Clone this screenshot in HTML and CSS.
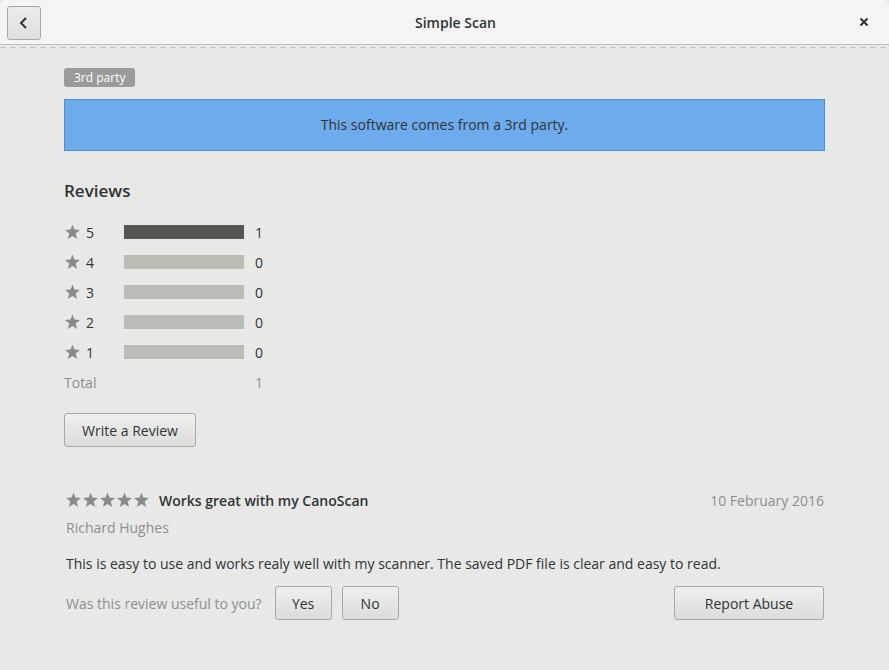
FILE: index.html
```html
<!DOCTYPE html>
<html lang="en">
<head>
    <meta charset="UTF-8">
    <meta name="viewport" content="width=device-width, initial-scale=1.0">
    <title>Simple Scan</title>
    <link rel="stylesheet" href="styles.css">
</head>
<body>
    <div class="window">
        <header class="titlebar">
            <button class="back-button" aria-label="Back">
                <svg width="16" height="16" viewBox="0 0 16 16"><path d="M10 3 L5 8 L10 13" fill="none" stroke="#2e3436" stroke-width="2"/></svg>
            </button>
            <div class="title">Simple Scan</div>
            <button class="close-button" aria-label="Close">
                <svg width="10" height="10" viewBox="0 0 10 10"><path d="M1.5 1.5 L8.5 8.5 M8.5 1.5 L1.5 8.5" stroke="#2e3436" stroke-width="2"/></svg>
            </button>
        </header>
        <div class="dashes"></div>

        <main class="content">
            <div class="badge">3rd party</div>
            <div class="banner">This software comes from a 3rd party.</div>

            <h2 class="section-title">Reviews</h2>
            <div class="histogram">
                <div class="hist-row">
                    <span class="star"></span><span class="hist-label">5</span>
                    <span class="bar"><span class="bar-fill" style="width: 100%;"></span></span>
                    <span class="hist-count">1</span>
                </div>
                <div class="hist-row">
                    <span class="star"></span><span class="hist-label">4</span>
                    <span class="bar"><span class="bar-fill" style="width: 0%;"></span></span>
                    <span class="hist-count">0</span>
                </div>
                <div class="hist-row">
                    <span class="star"></span><span class="hist-label">3</span>
                    <span class="bar"><span class="bar-fill" style="width: 0%;"></span></span>
                    <span class="hist-count">0</span>
                </div>
                <div class="hist-row">
                    <span class="star"></span><span class="hist-label">2</span>
                    <span class="bar"><span class="bar-fill" style="width: 0%;"></span></span>
                    <span class="hist-count">0</span>
                </div>
                <div class="hist-row">
                    <span class="star"></span><span class="hist-label">1</span>
                    <span class="bar"><span class="bar-fill" style="width: 0%;"></span></span>
                    <span class="hist-count">0</span>
                </div>
                <div class="hist-row total">
                    <span class="total-label">Total</span>
                    <span class="hist-count">1</span>
                </div>
            </div>

            <button class="button write-button">Write a Review</button>

            <div class="review">
                <div class="review-head">
                    <span class="stars">
                        <span class="star"></span><span class="star"></span><span class="star"></span><span class="star"></span><span class="star"></span>
                    </span>
                    <span class="review-title">Works great with my CanoScan</span>
                    <span class="review-date">10 February 2016</span>
                </div>
                <div class="review-author">Richard Hughes</div>
                <p class="review-text">This is easy to use and works realy well with my scanner. The saved PDF file is clear and easy to read.</p>
                <div class="review-actions">
                    <span class="question">Was this review useful to you?</span>
                    <button class="button vote-button">Yes</button>
                    <button class="button vote-button">No</button>
                    <button class="button report-button">Report Abuse</button>
                </div>
            </div>
        </main>
    </div>
</body>
</html>
```

FILE: styles.css
```css
body {
    margin: 0;
    font-family: "Open Sans", "DejaVu Sans", sans-serif;
    font-size: 14px;
    color: #2e3436;
    background-color: #e8e8e7;
    height: 670px;
    overflow: hidden;
}
.window {
    height: 100%;
}
.titlebar {
    height: 45px;
    background: #f4f4f4;
    border-bottom: 1px solid #c0c0bd;
    border-radius: 6px 6px 0 0;
    display: flex;
    align-items: center;
    padding: 0 8px 0 7px;
    box-sizing: border-box;
}
.back-button {
    width: 34px;
    height: 34px;
    border: 1px solid #a8a8a5;
    border-radius: 3px;
    background: linear-gradient(to bottom, #ececeb, #dededc);
    display: flex;
    align-items: center;
    justify-content: center;
    padding: 0;
    margin-top: 1px;
}
.title {
    flex: 1;
    text-align: center;
    font-weight: 600;
    font-size: 14px;
    margin-left: 20px;
}
.close-button {
    width: 28px;
    height: 28px;
    border: none;
    background: none;
    display: flex;
    align-items: center;
    justify-content: center;
    padding: 0;
    margin-right: 3px;
}
.dashes {
    height: 1px;
    margin-top: 2px;
    background: repeating-linear-gradient(to right, #c2c2bf 0, #c2c2bf 6px, transparent 6px, transparent 10px);
}
.content {
    padding: 19px 64px 0 64px;
}
.badge {
    display: inline-block;
    background: #9b9b9a;
    color: #fff;
    font-size: 12px;
    line-height: 19px;
    padding: 0 10px;
    border-radius: 3px;
}
.banner {
    margin-top: 12px;
    height: 50px;
    line-height: 50px;
    background: #6eabec;
    border: 1px solid #4a90d9;
    text-align: center;
    font-size: 14px;
    color: #2e3436;
}
.section-title {
    font-size: 17px;
    font-weight: 600;
    margin: 28px 0 0 0;
    line-height: 24px;
}
.histogram {
    margin-top: 14px;
    width: 200px;
}
.hist-row {
    display: flex;
    align-items: center;
    height: 30px;
}
.star {
    display: inline-block;
    width: 15px;
    height: 15px;
    background: #8a8a88;
    clip-path: polygon(50% 0%, 63% 34%, 100% 37%, 71% 60%, 81% 97%, 50% 76%, 19% 97%, 29% 60%, 0% 37%, 37% 34%);
}
.hist-row .star {
    margin-left: 1px;
}
.hist-label {
    width: 38px;
    margin-left: 6px;
}
.bar {
    width: 120px;
    height: 14px;
    background: #babcb5;
}
.bar-fill {
    display: block;
    height: 100%;
    background: #555752;
}
.hist-count {
    margin-left: 11px;
}
.total {
    color: #8d8f8f;
}
.total-label {
    width: 180px;
}
.button {
    font-family: inherit;
    font-size: 14px;
    color: #2e3436;
    border: 1px solid #a8a8a5;
    border-radius: 3px;
    background: linear-gradient(to bottom, #efefee, #dcdcda);
    height: 34px;
    padding: 0 16px;
}
.write-button {
    margin-top: 16px;
    width: 132px;
}
.review {
    margin-top: 39px;
    padding: 0 1px 0 2px;
}
.review-head {
    display: flex;
    align-items: center;
    height: 28px;
}
.stars {
    display: flex;
    gap: 2px;
}
.stars .star {
    width: 15px;
    height: 15px;
}
.review-title {
    font-weight: 600;
    margin-left: 10px;
    flex: 1;
}
.review-date {
    color: #8d8f8f;
}
.review-author {
    color: #8d8f8f;
    line-height: 28px;
}
.review-text {
    margin: 12px 0 0 0;
    line-height: 20px;
}
.review-actions {
    display: flex;
    align-items: center;
    margin-top: 12px;
}
.question {
    color: #8d8f8f;
    margin-right: 13px;
}
.vote-button {
    width: 57px;
    margin-right: 10px;
    padding: 0;
}
.report-button {
    margin-left: auto;
    width: 150px;
}
```
